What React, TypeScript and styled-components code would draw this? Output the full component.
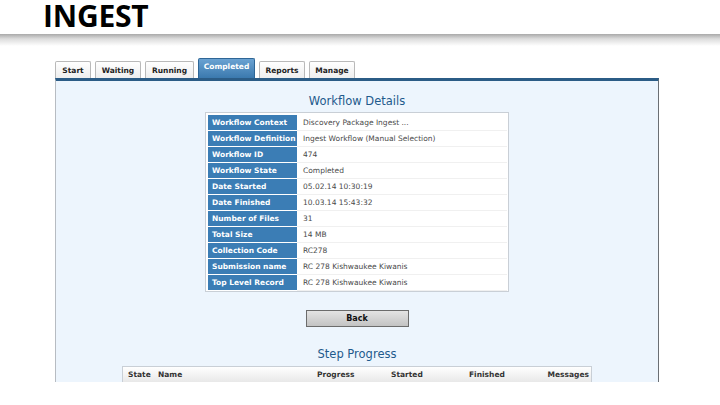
import React from "react";
import styled, { createGlobalStyle } from "styled-components";

const GlobalStyle = createGlobalStyle`
  html, body {
    margin: 0;
    padding: 0;
    background: #ffffff;
  }
  body {
    width: 720px;
    height: 405px;
    overflow: hidden;
    font-family: "DejaVu Sans", Verdana, sans-serif;
  }
`;

const tabs = [
  { label: "Start", width: 36 },
  { label: "Waiting", width: 46 },
  { label: "Running", width: 49 },
  { label: "Completed", width: 57 },
  { label: "Reports", width: 46 },
  { label: "Manage", width: 46 },
];

const details: { label: string; value: string }[] = [
  { label: "Workflow Context", value: "Discovery Package Ingest ..." },
  { label: "Workflow Definition", value: "Ingest Workflow (Manual Selection)" },
  { label: "Workflow ID", value: "474" },
  { label: "Workflow State", value: "Completed" },
  { label: "Date Started", value: "05.02.14 10:30:19" },
  { label: "Date Finished", value: "10.03.14 15:43:32" },
  { label: "Number of Files", value: "31" },
  { label: "Total Size", value: "14 MB" },
  { label: "Collection Code", value: "RC278" },
  { label: "Submission name", value: "RC 278 Kishwaukee Kiwanis" },
  { label: "Top Level Record", value: "RC 278 Kishwaukee Kiwanis" },
];

const stepColumns = [
  { label: "State", width: "30px" },
  { label: "Name", width: "159px" },
  { label: "Progress", width: "74px" },
  { label: "Started", width: "78px" },
  { label: "Finished", width: "76px" },
  { label: "Messages", width: "auto" },
];

const App: React.FC = () => {
  return (
    <Page>
      <GlobalStyle />
      <Header>
        <Title>INGEST</Title>
      </Header>
      <Shade />
      <Content>
        <TabBar>
          {tabs.map((t) => (
            <Tab key={t.label} w={t.width} active={t.label === "Completed"}>
              {t.label}
            </Tab>
          ))}
        </TabBar>
        <Panel>
          <SectionTitle>Workflow Details</SectionTitle>
          <DetailsTable>
            {details.map((d) => (
              <DetailRow key={d.label}>
                <LabelCell>{d.label}</LabelCell>
                <ValueCell>{d.value}</ValueCell>
              </DetailRow>
            ))}
          </DetailsTable>
          <BackButton>Back</BackButton>
          <SectionTitle small>Step Progress</SectionTitle>
          <StepHeader>
            {stepColumns.map((c) => (
              <StepCol key={c.label} style={{ width: c.width }}>
                {c.label}
              </StepCol>
            ))}
          </StepHeader>
        </Panel>
      </Content>
    </Page>
  );
};

export default App;

const Page = styled.div`
  width: 720px;
  height: 405px;
  display: flex;
  flex-direction: column;
  background: #ffffff;
`;

const Header = styled.div`
  height: 34px;
  padding-left: 43px;
  display: flex;
  align-items: flex-start;
`;

const Title = styled.h1`
  margin: 0;
  font-family: "Open Sans", "Liberation Sans", sans-serif;
  font-weight: 700;
  font-size: 30px;
  line-height: 32px;
  letter-spacing: -0.2px;
  color: #000000;
`;

const Shade = styled.div`
  height: 12px;
  background: linear-gradient(to bottom, #a9a9a9 0%, #dcdcdc 40%, #ffffff 100%);
`;

const Content = styled.div`
  padding: 14px 0 0 55px;
  width: 604px;
`;

const TabBar = styled.div`
  display: flex;
  align-items: flex-end;
  gap: 4px;
  height: 18px;
`;

const Tab = styled.div<{ active?: boolean; w: number }>`
  box-sizing: border-box;
  width: ${(p) => p.w}px;
  height: ${(p) => (p.active ? "20px" : "17px")};
  display: flex;
  align-items: center;
  justify-content: center;
  font-size: 7.5px;
  font-weight: 700;
  white-space: nowrap;
  border: 1px solid ${(p) => (p.active ? "#2e6696" : "#b9b9b9")};
  border-bottom: none;
  border-radius: 2px 2px 0 0;
  color: ${(p) => (p.active ? "#ffffff" : "#222222")};
  background: ${(p) =>
    p.active
      ? "linear-gradient(to bottom, #6aa2d2 0%, #3b79ae 100%)"
      : "linear-gradient(to bottom, #ffffff 0%, #eeeeee 100%)"};
  padding-bottom: ${(p) => (p.active ? "4px" : "0")};
`;

const Panel = styled.div`
  height: 301px;
  border-top: 3px solid #2b5c86;
  border-left: 1px solid #b7bcc2;
  border-right: 1px solid #6b6f74;
  background: #edf5fd;
  display: flex;
  flex-direction: column;
  align-items: center;
  overflow: hidden;
`;

const SectionTitle = styled.div<{ small?: boolean }>`
  margin-top: ${(p) => (p.small ? "20px" : "13px")};
  font-size: 11.5px;
  line-height: 14px;
  color: #1f5a8c;
  margin-bottom: ${(p) => (p.small ? "5px" : "4px")};
`;

const DetailsTable = styled.div`
  width: 299px;
  background: #ffffff;
  border: 1px solid #c9cfd6;
  padding: 2px 1px 0 2px;
  display: flex;
  flex-direction: column;
`;

const DetailRow = styled.div`
  display: flex;
  height: 16px;
`;

const LabelCell = styled.div`
  width: 85px;
  padding-left: 4px;
  margin-bottom: 1px;
  background: #3b7db5;
  color: #ffffff;
  font-size: 7.5px;
  font-weight: 700;
  display: flex;
  align-items: center;
  white-space: nowrap;
  overflow: hidden;
`;

const ValueCell = styled.div`
  flex: 1;
  padding-left: 6px;
  color: #4a4a4a;
  font-size: 7.5px;
  display: flex;
  align-items: center;
  white-space: nowrap;
  border-bottom: 1px solid #f0f0f0;
`;

const BackButton = styled.div`
  margin-top: 18px;
  width: 101px;
  height: 15px;
  border: 1px solid #6c6c6c;
  background: linear-gradient(to bottom, #e4e4e4 0%, #c3c3c3 100%);
  font-size: 8px;
  font-weight: 700;
  color: #111111;
  display: flex;
  align-items: center;
  justify-content: center;
`;

const StepHeader = styled.div`
  width: 461px;
  height: 15px;
  border: 1px solid #c9cfd6;
  border-bottom: none;
  padding: 0 2px 0 5px;
  background: linear-gradient(to bottom, #ffffff 0%, #e8e8e8 100%);
  display: flex;
  align-items: center;
`;

const StepCol = styled.div`
  font-size: 7.5px;
  font-weight: 700;
  color: #333333;
  white-space: nowrap;
  &:last-child {
    flex: 1;
    text-align: right;
  }
`;
